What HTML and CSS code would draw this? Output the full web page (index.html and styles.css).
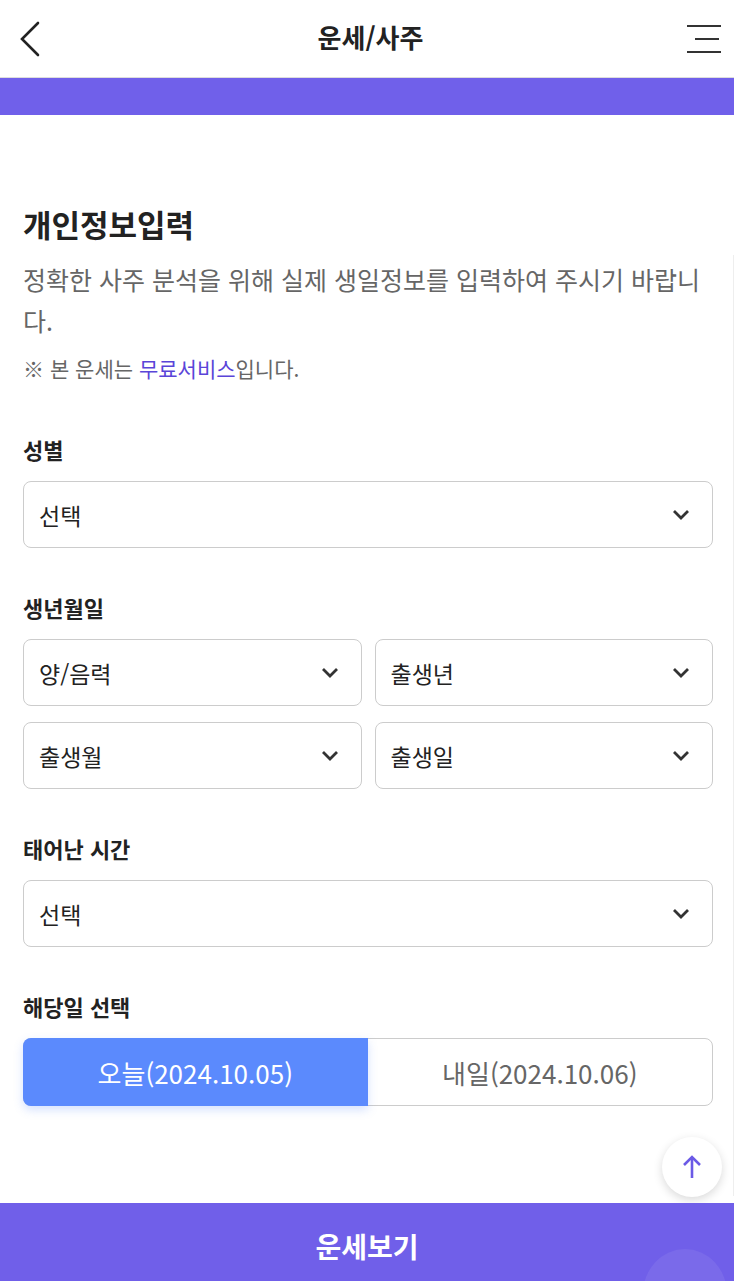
FILE: index.html
```html
<!DOCTYPE html>
<html lang="ko">
<head>
  <meta charset="UTF-8">
  <meta name="viewport" content="width=device-width, initial-scale=1.0">
  <title>운세/사주</title>
  <link rel="stylesheet" href="styles.css">
</head>
<body>
  <header class="top-bar">
    <button class="icon-btn back-btn" aria-label="뒤로">
      <svg width="22" height="36" viewBox="0 0 22 36">
        <polyline points="18,2 2,18 18,34" fill="none" stroke="#222" stroke-width="2.6" stroke-linecap="round" stroke-linejoin="miter"/>
      </svg>
    </button>
    <h1 class="page-title">운세/사주</h1>
    <button class="icon-btn menu-btn" aria-label="메뉴">
      <span class="line line-top"></span>
      <span class="line line-mid"></span>
      <span class="line line-bottom"></span>
    </button>
  </header>

  <div class="banner"></div>

  <main class="content">
    <section class="intro">
      <h2>개인정보입력</h2>
      <p class="desc">정확한 사주 분석을 위해 실제 생일정보를 입력하여 주시기 바랍니다.</p>
      <p class="note">※ 본 운세는 <span class="free">무료서비스</span>입니다.</p>
    </section>

    <div class="field">
      <label class="field-label">성별</label>
      <div class="select">
        <span>선택</span>
        <svg class="chev" width="18" height="12" viewBox="0 0 18 12"><polyline points="2,2 9,9 16,2" fill="none" stroke="#333" stroke-width="2.8"/></svg>
      </div>
    </div>

    <div class="field">
      <label class="field-label">생년월일</label>
      <div class="select-grid">
        <div class="select">
          <span>양/음력</span>
          <svg class="chev" width="18" height="12" viewBox="0 0 18 12"><polyline points="2,2 9,9 16,2" fill="none" stroke="#333" stroke-width="2.8"/></svg>
        </div>
        <div class="select">
          <span>출생년</span>
          <svg class="chev" width="18" height="12" viewBox="0 0 18 12"><polyline points="2,2 9,9 16,2" fill="none" stroke="#333" stroke-width="2.8"/></svg>
        </div>
        <div class="select">
          <span>출생월</span>
          <svg class="chev" width="18" height="12" viewBox="0 0 18 12"><polyline points="2,2 9,9 16,2" fill="none" stroke="#333" stroke-width="2.8"/></svg>
        </div>
        <div class="select">
          <span>출생일</span>
          <svg class="chev" width="18" height="12" viewBox="0 0 18 12"><polyline points="2,2 9,9 16,2" fill="none" stroke="#333" stroke-width="2.8"/></svg>
        </div>
      </div>
    </div>

    <div class="field">
      <label class="field-label">태어난 시간</label>
      <div class="select">
        <span>선택</span>
        <svg class="chev" width="18" height="12" viewBox="0 0 18 12"><polyline points="2,2 9,9 16,2" fill="none" stroke="#333" stroke-width="2.8"/></svg>
      </div>
    </div>

    <div class="field">
      <label class="field-label">해당일 선택</label>
      <div class="day-toggle">
        <button class="day-btn active">오늘(2024.10.05)</button>
        <button class="day-btn">내일(2024.10.06)</button>
      </div>
    </div>
  </main>

  <div class="edge-line"></div>

  <button class="scroll-top" aria-label="맨 위로">
    <svg width="22" height="26" viewBox="0 0 22 26">
      <line x1="11" y1="3" x2="11" y2="24" stroke="#6b5ae6" stroke-width="2.6"/>
      <polyline points="3,11 11,3 19,11" fill="none" stroke="#6b5ae6" stroke-width="2.6"/>
    </svg>
  </button>

  <footer class="bottom-bar">
    <button class="submit-btn">운세보기</button>
    <span class="ripple"></span>
  </footer>
</body>
</html>
```

FILE: styles.css
```css
* {
  margin: 0;
  padding: 0;
  box-sizing: border-box;
}

body {
  font-family: "Noto Sans CJK KR", "Noto Sans", sans-serif;
  background: #fff;
  color: #222;
  width: 734px;
  height: 1281px;
  position: relative;
  overflow: hidden;
}

button {
  font-family: inherit;
  background: none;
  border: none;
  cursor: pointer;
}

.top-bar {
  height: 78px;
  display: flex;
  align-items: center;
  justify-content: space-between;
  padding: 0 13px 0 20px;
  border-bottom: 1px solid #ddd;
}

.icon-btn {
  width: 34px;
  height: 40px;
  display: flex;
  align-items: center;
}

.back-btn svg {
  display: block;
}

.page-title {
  font-size: 26px;
  font-weight: 700;
  color: #222;
  line-height: 34px;
  margin-top: -4px;
}

.menu-btn {
  flex-direction: column;
  align-items: flex-end;
  justify-content: space-between;
  height: 28px;
  width: 34px;
}

.menu-btn .line {
  display: block;
  height: 2px;
  background: #333;
}

.line-top,
.line-bottom {
  width: 34px;
}

.line-mid {
  width: 24px;
  margin-right: 2px;
}

.banner {
  height: 37px;
  background: #7060ea;
}

.content {
  padding: 88px 21px 0 23px;
}

.intro h2 {
  font-size: 31px;
  font-weight: 700;
  color: #222;
  line-height: 42px;
}

.desc {
  margin-top: 14px;
  font-size: 25px;
  line-height: 41px;
  color: #666;
}

.note {
  margin-top: 12px;
  font-size: 21px;
  line-height: 30px;
  color: #666;
}

.note .free {
  color: #5a45d8;
}

.field {
  margin-top: 52px;
}

.field-label {
  display: block;
  font-size: 22px;
  font-weight: 700;
  color: #222;
  line-height: 28px;
  margin-bottom: 18px;
}

.field + .field {
  margin-top: 45px;
}

.select {
  height: 67px;
  border: 1px solid #cccccc;
  border-radius: 8px;
  display: flex;
  align-items: center;
  justify-content: space-between;
  padding: 0 22px 0 15px;
  font-size: 23px;
  color: #222;
}

.select-grid {
  display: grid;
  grid-template-columns: 1fr 1fr;
  column-gap: 13px;
  row-gap: 16px;
}

.chev {
  display: block;
}

.day-toggle {
  display: flex;
  height: 68px;
  border: 1px solid #cccccc;
  border-radius: 8px;
}

.day-btn {
  flex: 1;
  font-size: 26px;
  color: #666;
}

.day-btn.active {
  margin: -1px 0 -1px -1px;
  background: #5b8afd;
  color: #fff;
  border-radius: 8px 0 0 8px;
  box-shadow: 0 4px 10px rgba(91, 138, 253, 0.25);
}

.edge-line {
  position: absolute;
  right: 0;
  top: 255px;
  height: 941px;
  width: 1px;
  background: #eee;
}

.scroll-top {
  position: absolute;
  left: 662px;
  top: 1137px;
  width: 60px;
  height: 60px;
  border-radius: 50%;
  background: #fff;
  box-shadow: 0 3px 10px rgba(0, 0, 0, 0.15);
  display: flex;
  align-items: center;
  justify-content: center;
}

.bottom-bar {
  position: absolute;
  left: 0;
  right: 0;
  bottom: 0;
  height: 78px;
  background: #705fe9;
  overflow: hidden;
}

.submit-btn {
  width: 100%;
  height: 100%;
  padding-top: 8px;
  font-size: 28px;
  font-weight: 700;
  color: #fff;
}

.ripple {
  position: absolute;
  left: 643px;
  top: 46px;
  width: 84px;
  height: 90px;
  border-radius: 50%;
  background: rgba(255, 255, 255, 0.07);
}
```
